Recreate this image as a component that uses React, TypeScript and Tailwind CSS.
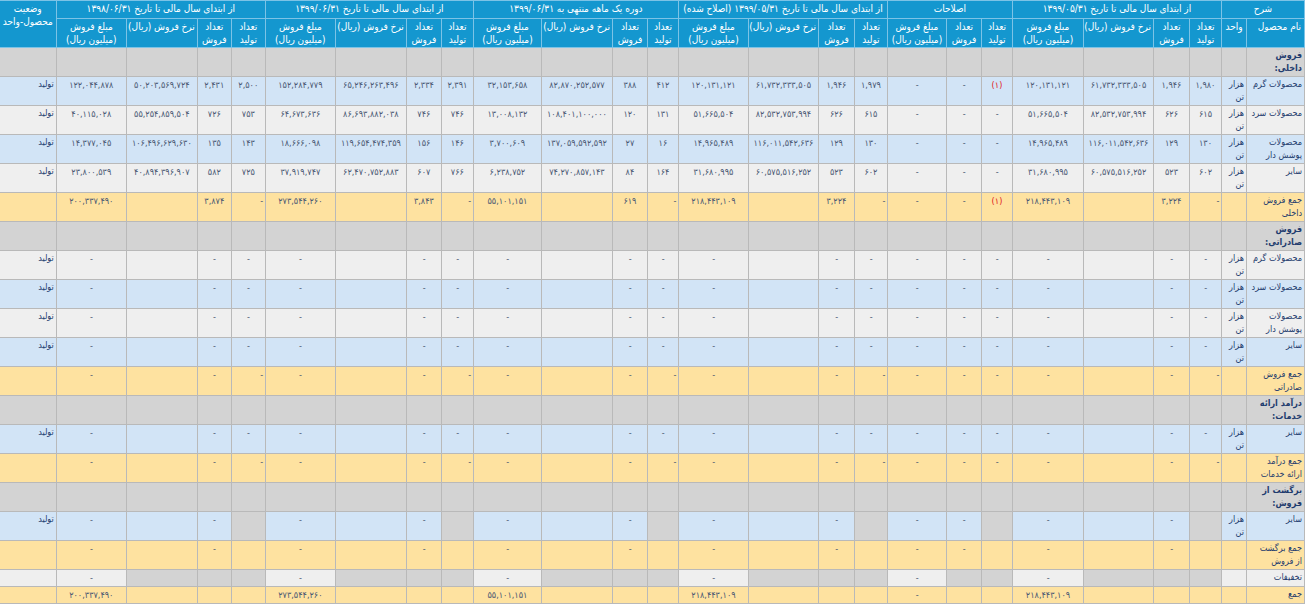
import React from "react";

type Row = {
  kind: "section" | "item" | "total" | "ret" | "retTotal" | "disc" | "grand";
  name: string;
  unit?: boolean;
  bg?: "blue" | "gray";
  cells?: string[];
  status?: string;
};

// column kinds in rtl order: p = تولید, s = فروش, r = نرخ, a = مبلغ
const kinds = ["p", "s", "r", "a", "p", "s", "a", "p", "s", "r", "a", "p", "s", "r", "a", "p", "s", "r", "a", "p", "s", "r", "a"];

const colWidths = [
  "w-[58px]", "w-[25px]",
  "w-[32px]", "w-[36px]", "w-[70px]", "w-[71px]",
  "w-[31px]", "w-[35px]", "w-[59px]",
  "w-[33px]", "w-[36px]", "w-[70px]", "w-[70px]",
  "w-[31px]", "w-[35px]", "w-[71px]", "w-[68px]",
  "w-[32px]", "w-[35px]", "w-[71px]", "w-[70px]",
  "w-[34px]", "w-[34px]", "w-[71px]", "w-[70px]",
  "w-[57px]",
];

const groups: [string, number][] = [
  ["از ابتدای سال مالی تا تاریخ ۱۳۹۹/۰۵/۳۱", 4],
  ["اصلاحات", 3],
  ["از ابتدای سال مالی تا تاریخ ۱۳۹۹/۰۵/۳۱ (اصلاح شده)", 4],
  ["دوره یک ماهه منتهی به ۱۳۹۹/۰۶/۳۱", 4],
  ["از ابتدای سال مالی تا تاریخ ۱۳۹۹/۰۶/۳۱", 4],
  ["از ابتدای سال مالی تا تاریخ ۱۳۹۸/۰۶/۳۱", 4],
];

const subHead: Record<string, [string, string]> = {
  p: ["تعداد", "تولید"],
  s: ["تعداد", "فروش"],
  r: ["نرخ فروش (ریال)", ""],
  a: ["مبلغ فروش", "(میلیون ریال)"],
};

const dashes = ["-", "-", "", "-", "-", "-", "-", "-", "-", "", "-", "-", "-", "", "-", "-", "-", "", "-", "-", "-", "", "-"];
const retCells = ["", "-", "", "-", "", "-", "-", "", "-", "", "-", "", "-", "", "-", "", "-", "", "-", "", "-", "", "-"];
const discCells = ["", "", "", "-", "", "", "-", "", "", "", "-", "", "", "", "-", "", "", "", "-", "", "", "", "-"];

const rows: Row[] = [
  { kind: "section", name: "فروش داخلی:" },
  {
    kind: "item", name: "محصولات گرم", unit: true, bg: "blue", status: "تولید",
    cells: ["۱,۹۸۰", "۱,۹۴۶", "۶۱,۷۳۲,۳۳۳,۵۰۵", "۱۲۰,۱۳۱,۱۲۱", "(۱)", "-", "-", "۱,۹۷۹", "۱,۹۴۶", "۶۱,۷۳۲,۳۳۳,۵۰۵", "۱۲۰,۱۳۱,۱۲۱", "۴۱۲", "۳۸۸", "۸۲,۸۷۰,۲۵۲,۵۷۷", "۳۲,۱۵۳,۶۵۸", "۲,۳۹۱", "۲,۳۳۴", "۶۵,۲۴۶,۲۶۳,۴۹۶", "۱۵۲,۲۸۴,۷۷۹", "۲,۵۰۰", "۲,۴۳۱", "۵۰,۲۰۳,۵۶۹,۷۲۴", "۱۲۲,۰۴۴,۸۷۸"],
  },
  {
    kind: "item", name: "محصولات سرد", unit: true, bg: "gray", status: "تولید",
    cells: ["۶۱۵", "۶۲۶", "۸۲,۵۳۲,۷۵۳,۹۹۴", "۵۱,۶۶۵,۵۰۴", "-", "-", "-", "۶۱۵", "۶۲۶", "۸۲,۵۳۲,۷۵۳,۹۹۴", "۵۱,۶۶۵,۵۰۴", "۱۳۱", "۱۲۰", "۱۰۸,۴۰۱,۱۰۰,۰۰۰", "۱۳,۰۰۸,۱۳۲", "۷۴۶", "۷۴۶", "۸۶,۶۹۳,۸۸۲,۰۳۸", "۶۴,۶۷۳,۶۳۶", "۷۵۳", "۷۲۶", "۵۵,۲۵۴,۸۵۹,۵۰۴", "۴۰,۱۱۵,۰۲۸"],
  },
  {
    kind: "item", name: "محصولات پوشش دار", unit: true, bg: "blue", status: "تولید",
    cells: ["۱۳۰", "۱۲۹", "۱۱۶,۰۱۱,۵۴۲,۶۳۶", "۱۴,۹۶۵,۴۸۹", "-", "-", "-", "۱۳۰", "۱۲۹", "۱۱۶,۰۱۱,۵۴۲,۶۳۶", "۱۴,۹۶۵,۴۸۹", "۱۶", "۲۷", "۱۳۷,۰۵۹,۵۹۲,۵۹۲", "۳,۷۰۰,۶۰۹", "۱۴۶", "۱۵۶", "۱۱۹,۶۵۴,۴۷۴,۳۵۹", "۱۸,۶۶۶,۰۹۸", "۱۴۳", "۱۳۵", "۱۰۶,۴۹۶,۶۲۹,۶۳۰", "۱۴,۳۷۷,۰۴۵"],
  },
  {
    kind: "item", name: "سایر", unit: true, bg: "gray", status: "تولید",
    cells: ["۶۰۲", "۵۲۳", "۶۰,۵۷۵,۵۱۶,۲۵۲", "۳۱,۶۸۰,۹۹۵", "-", "-", "-", "۶۰۲", "۵۲۳", "۶۰,۵۷۵,۵۱۶,۲۵۲", "۳۱,۶۸۰,۹۹۵", "۱۶۴", "۸۴", "۷۴,۲۷۰,۸۵۷,۱۴۳", "۶,۲۳۸,۷۵۲", "۷۶۶", "۶۰۷", "۶۲,۴۷۰,۷۵۲,۸۸۳", "۳۷,۹۱۹,۷۴۷", "۷۲۵", "۵۸۲", "۴۰,۸۹۴,۳۹۶,۹۰۷", "۲۳,۸۰۰,۵۳۹"],
  },
  {
    kind: "total", name: "جمع فروش|داخلی",
    cells: ["-", "۳,۲۲۴", "", "۲۱۸,۴۴۳,۱۰۹", "(۱)", "-", "-", "-", "۳,۲۲۴", "", "۲۱۸,۴۴۳,۱۰۹", "-", "۶۱۹", "", "۵۵,۱۰۱,۱۵۱", "-", "۳,۸۴۳", "", "۲۷۳,۵۴۴,۲۶۰", "-", "۳,۸۷۴", "", "۲۰۰,۳۳۷,۴۹۰"],
  },
  { kind: "section", name: "فروش|صادراتی:" },
  { kind: "item", name: "محصولات گرم", unit: true, bg: "gray", status: "تولید", cells: dashes },
  { kind: "item", name: "محصولات سرد", unit: true, bg: "blue", status: "تولید", cells: dashes },
  { kind: "item", name: "محصولات|پوشش دار", unit: true, bg: "gray", status: "تولید", cells: dashes },
  { kind: "item", name: "سایر", unit: true, bg: "blue", status: "تولید", cells: dashes },
  { kind: "total", name: "جمع فروش|صادراتی", cells: dashes },
  { kind: "section", name: "درآمد ارائه|خدمات:" },
  { kind: "item", name: "سایر", unit: true, bg: "blue", status: "تولید", cells: dashes },
  { kind: "total", name: "جمع درآمد|ارائه خدمات", cells: dashes },
  { kind: "section", name: "برگشت از|فروش:" },
  { kind: "ret", name: "سایر", unit: true, bg: "blue", status: "تولید", cells: retCells },
  { kind: "retTotal", name: "جمع برگشت|از فروش", cells: retCells },
  { kind: "disc", name: "تخفیفات", cells: discCells },
  {
    kind: "grand", name: "جمع",
    cells: ["", "", "", "۲۱۸,۴۴۳,۱۰۹", "", "", "-", "", "", "", "۲۱۸,۴۴۳,۱۰۹", "", "", "", "۵۵,۱۰۱,۱۵۱", "", "", "", "۲۷۳,۵۴۴,۲۶۰", "", "", "", "۲۰۰,۳۳۷,۴۹۰"],
  },
];

const bd = "border border-[#b9b9b9]";
const hd = "border border-[#7cc3e6] bg-[#1497cf] text-white font-normal align-top";

function rowBg(r: Row) {
  if (r.kind === "section") return "bg-[#d3d3d3]";
  if (r.kind === "total" || r.kind === "retTotal" || r.kind === "grand") return "bg-[#fee2a0]";
  if (r.kind === "disc") return "bg-[#efefef]";
  return r.bg === "blue" ? "bg-[#d2e4f6]" : "bg-[#efefef]";
}

function DataRow({ r }: { r: Row }) {
  const bg = rowBg(r);
  const h = r.kind === "disc" || r.kind === "grand" ? "h-[17px]" : "h-[29px]";
  const totalish = r.kind === "total";
  const parts = r.name.split("|");
  return (
    <tr className={h}>
      <td className={`${bd} ${bg} px-[2px] pt-[1px] align-top text-right text-[9px] tracking-[-0.2px] text-[#1f3c6e] ${r.kind === "section" ? "font-bold" : ""}`}>
        {parts.map((p, i) => (
          <React.Fragment key={i}>
            {i > 0 && <br />}
            {p}
          </React.Fragment>
        ))}
      </td>
      <td className={`${bd} ${bg} px-[2px] pt-[1px] align-top text-right text-[9px] text-[#1f3c6e]`}>{r.unit ? "هزار تن" : ""}</td>
      {kinds.map((k, i) => {
        const v = r.cells ? r.cells[i] : "";
        let cellBg = bg;
        if (r.kind === "ret" && k === "p") cellBg = "bg-[#d3d3d3]";
        if (r.kind === "disc" && k !== "a") cellBg = "bg-[#d3d3d3]";
        const red = v === "(۱)";
        const right = totalish && k === "p" && i !== 4;
        return (
          <td
            key={i}
            className={`${bd} ${cellBg} px-[2px] pt-[2px] align-top whitespace-nowrap text-[9px] tracking-[-0.4px] ${right ? "text-right" : "text-center"} ${red ? "text-[#e0201a]" : "text-[#4a5873]"}`}
          >
            {v}
          </td>
        );
      })}
      <td className={`${bd} ${bg} px-[2px] pt-[1px] align-top text-right text-[9px] text-[#1f3c6e]`}>{r.status ?? ""}</td>
    </tr>
  );
}

export default function App() {
  return (
    <div dir="rtl" className="w-[1305px] h-[609px] bg-white overflow-hidden" style={{ fontFamily: '"DejaVu Sans Condensed", "DejaVu Sans", sans-serif' }}>
      <table className="table-fixed border-collapse w-[1305px] text-[10px] leading-[13px]">
        <colgroup>
          {colWidths.map((c, i) => (
            <col key={i} className={c} />
          ))}
        </colgroup>
        <thead>
          <tr className="h-[18px]">
            <th colSpan={2} className={`${hd} px-[3px] pt-[1px] text-center`}>شرح</th>
            {groups.map(([g, n], i) => (
              <th key={i} colSpan={n} className={`${hd} px-[3px] pt-[1px] text-center whitespace-nowrap`}>
                {g}
              </th>
            ))}
            <th rowSpan={2} className={`${hd} px-[3px] pt-[1px] text-center`}>
              وضعیت
              <br />
              محصول-واحد
            </th>
          </tr>
          <tr className="h-[29px]">
            <th className={`${hd} px-[3px] pt-[1px] text-right`}>نام محصول</th>
            <th className={`${hd} px-[2px] pt-[1px] text-center`}>واحد</th>
            {kinds.map((k, i) => (
              <th key={i} className={`${hd} px-[2px] pt-[1px] text-center whitespace-nowrap`}>
                {subHead[k][0]}
                {subHead[k][1] && (
                  <>
                    <br />
                    {subHead[k][1]}
                  </>
                )}
              </th>
            ))}
          </tr>
        </thead>
        <tbody>
          {rows.map((r, i) => (
            <DataRow key={i} r={r} />
          ))}
        </tbody>
      </table>
    </div>
  );
}
